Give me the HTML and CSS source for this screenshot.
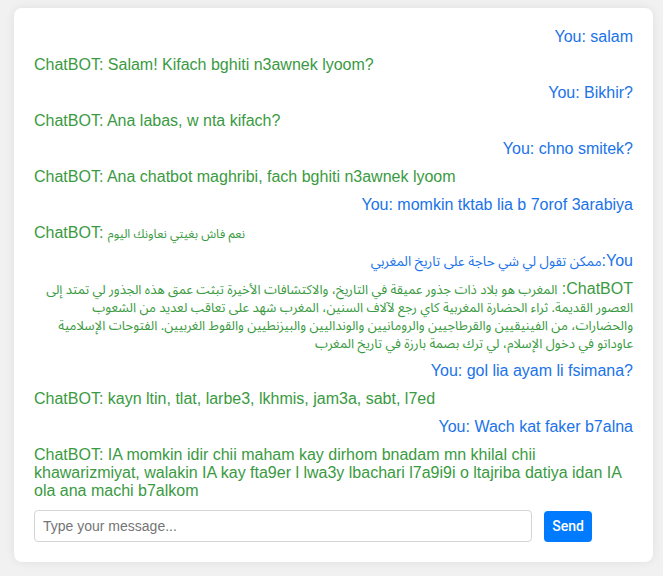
FILE: index.html
```html
<!DOCTYPE html>
<html lang="en">
<head>
<meta charset="utf-8">
<title>ChatBOT</title>
<link rel="stylesheet" href="styles.css">
</head>
<body>
<div class="card">
  <div class="chat">
    <div class="msg user">You: salam</div>
    <div class="msg bot">ChatBOT: Salam! Kifach bghiti n3awnek lyoom?</div>
    <div class="msg user">You: Bikhir?</div>
    <div class="msg bot">ChatBOT: Ana labas, w nta kifach?</div>
    <div class="msg user">You: chno smitek?</div>
    <div class="msg bot">ChatBOT: Ana chatbot maghribi, fach bghiti n3awnek lyoom</div>
    <div class="msg user">You: momkin tktab lia b 7orof 3arabiya</div>
    <div class="msg bot">ChatBOT: <span class="ar">نعم فاش بغيتي نعاونك اليوم</span></div>
    <div class="msg user" dir="rtl">You:<span class="ar ar-lg">ممكن تقول لي شي حاجة على تاريخ المغربي</span></div>
    <div class="msg bot rtl" dir="rtl">ChatBOT: <span class="ar ar-md">المغرب هو بلاد ذات جذور عميقة في التاريخ، والاكتشافات الأخيرة تبثت عمق هذه الجذور لي تمتد إلى العصور القديمة. ثراء الحضارة المغربية كاي رجع لآلاف السنين، المغرب شهد على تعاقب لعديد من الشعوب والحضارات، من الفينيقيين والقرطاجيين والرومانيين والونداليين والبيزنطيين والقوط الغربيين. الفتوحات الإسلامية عاوداتو في دخول الإسلام، لي ترك بصمة بارزة في تاريخ المغرب</span></div>
    <div class="msg user">You: gol lia ayam li fsimana?</div>
    <div class="msg bot">ChatBOT: kayn ltin, tlat, larbe3, lkhmis, jam3a, sabt, l7ed</div>
    <div class="msg user">You: Wach kat faker b7alna</div>
    <div class="msg bot">ChatBOT: IA momkin idir chii maham kay dirhom bnadam mn khilal chii khawarizmiyat, walakin IA kay fta9er l lwa3y lbachari l7a9i9i o ltajriba datiya idan IA ola ana machi b7alkom</div>
  </div>
  <form class="composer" onsubmit="return false">
    <input class="field" type="text" placeholder="Type your message...">
    <button class="send" type="submit">Send</button>
  </form>
</div>
</body>
</html>
```

FILE: styles.css
```css
html, body {
  margin: 0;
  padding: 0;
  background: #f1f1f1;
  font-family: "Liberation Sans", Arial, "DejaVu Sans", sans-serif;
}

body {
  padding: 8px 10px 14px 14px;
}

.card {
  width: 639px;
  box-sizing: border-box;
  background: #ffffff;
  border-radius: 8px;
  box-shadow: 0 0 10px rgba(0, 0, 0, 0.08);
  padding: 20px;
}

.chat {
  display: flex;
  flex-direction: column;
}

.msg {
  font-size: 16px;
  line-height: 18px;
  margin-bottom: 10px;
}

.ar {
  font-family: "Noto Sans Arabic", "Noto Naskh Arabic", "DejaVu Sans", sans-serif;
  font-size: 12.3px;
  line-height: 0;
}

.ar-md {
  font-size: 13.1px;
}

.ar-lg {
  font-size: 13.6px;
}

.user {
  color: #1a73e8;
  text-align: right;
}

.bot {
  color: #3a9a42;
  text-align: left;
}

.bot.rtl {
  text-align: right;
}

.composer {
  display: flex;
  align-items: center;
  gap: 12px;
  margin: 0;
}

.field {
  width: 498px;
  height: 32px;
  box-sizing: border-box;
  border: 1px solid #d4d4d4;
  border-radius: 4px;
  padding: 0 8px;
  font-family: "Liberation Sans", Arial, sans-serif;
  font-size: 14px;
  color: #333;
  outline: none;
}

.field::placeholder {
  color: #757575;
}

.send {
  width: 48px;
  height: 31px;
  border: none;
  border-radius: 4px;
  background: #007bff;
  color: #ffffff;
  font-family: Roboto, "Liberation Sans", sans-serif;
  font-weight: 500;
  font-size: 14px;
  padding: 0;
  cursor: pointer;
}
```
